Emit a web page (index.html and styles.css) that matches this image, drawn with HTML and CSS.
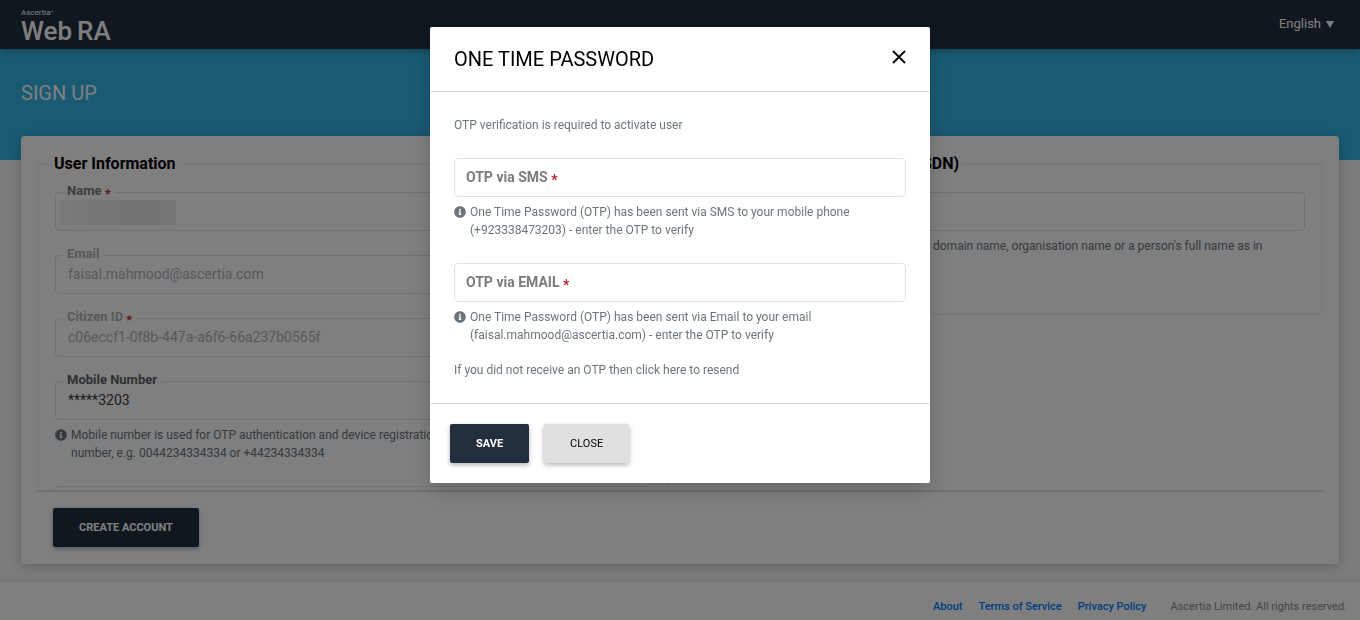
FILE: index.html
```html
<!DOCTYPE html>
<html lang="en">
<head>
<meta charset="utf-8">
<title>Sign Up - Ascertia WebRA</title>
<link rel="stylesheet" href="styles.css">
</head>
<body>
<svg class="sprite" aria-hidden="true">
  <symbol id="info" viewBox="0 0 512 512"><path fill="currentColor" d="M256 8C119 8 8 119 8 256s111 248 248 248 248-111 248-248S393 8 256 8zm0 110a42 42 0 1 1 0 84 42 42 0 0 1 0-84zm56 254a12 12 0 0 1-12 12h-88a12 12 0 0 1-12-12v-24a12 12 0 0 1 12-12h12v-64h-12a12 12 0 0 1-12-12v-24a12 12 0 0 1 12-12h64a12 12 0 0 1 12 12v100h12a12 12 0 0 1 12 12z"/></symbol>
</svg>
<div class="page">
  <header class="topbar">
    <a class="logo" href="#">
      <span class="logo-small">Ascertia<span class="logo-tm">™</span></span>
      <span class="logo-big"><span>Web</span><span>RA</span></span>
    </a>
    <button class="language" type="button">English
      <svg class="caret" viewBox="0 0 8 7" aria-hidden="true"><path fill="currentColor" d="M0 0h8L4 7z"/></svg>
    </button>
  </header>

  <main class="main">
    <h1 class="page-title">SIGN UP</h1>
    <form class="card">
      <div class="columns">
        <fieldset class="group">
          <legend>User Information</legend>
          <div class="group-body">
            <div class="field">
              <input id="name" type="text">
              <label class="muted" for="name">Name <span class="req">*</span></label>
              <span class="redacted"></span>
            </div>
            <div class="field">
              <input id="email" type="email" value="faisal.mahmood@ascertia.com" disabled>
              <label for="email">Email</label>
            </div>
            <div class="field">
              <input id="citizen" type="text" value="c06eccf1-0f8b-447a-a6f6-66a237b0565f" disabled>
              <label for="citizen">Citizen ID <span class="req">*</span></label>
            </div>
            <div class="field">
              <input id="mobile" type="text" value="*****3203">
              <label for="mobile">Mobile Number</label>
              <p class="hint"><svg aria-hidden="true"><use href="#info"/></svg><span>Mobile number is used for OTP authentication and device registration, enter a valid mobile<br>number, e.g. 0044234334334 or +44234334334</span></p>
            </div>
            <div class="field">
              <input type="text" aria-label="Additional information">
            </div>
          </div>
        </fieldset>
        <fieldset class="group">
          <legend>Subject Distinguished Name (SDN)</legend>
          <div class="group-body">
            <div class="field">
              <input id="cn" type="text">
              <label for="cn">Common Name</label>
              <p class="hint"><svg aria-hidden="true"><use href="#info"/></svg><span>Common name can be a fully qualified domain name, organisation name or a person's full name as in<br>their passport</span></p>
            </div>
          </div>
        </fieldset>
      </div>
      <div class="card-actions">
        <button class="btn btn-primary" type="submit">CREATE ACCOUNT</button>
      </div>
    </form>
  </main>

  <footer class="footer">
    <nav class="footer-links">
      <a href="#">About</a>
      <a href="#">Terms of Service</a>
      <a href="#">Privacy Policy</a>
    </nav>
    <span>Ascertia Limited. All rights reserved.</span>
  </footer>
</div>

<div class="backdrop">
  <form class="modal" role="dialog" aria-labelledby="otp-title">
    <header class="modal-header">
      <h2 id="otp-title">ONE TIME PASSWORD</h2>
      <button class="modal-x" type="button" aria-label="Close dialog">
        <svg viewBox="0 0 14 14" aria-hidden="true"><path d="M1 1l12 12M13 1L1 13" stroke="currentColor" stroke-width="1.8" fill="none"/></svg>
      </button>
    </header>
    <div class="modal-body">
      <p class="note">OTP verification is required to activate user</p>
      <div class="field field-empty">
        <input id="otp-sms" type="text">
        <label for="otp-sms">OTP via SMS <span class="req">*</span></label>
        <p class="hint"><svg aria-hidden="true"><use href="#info"/></svg><span>One Time Password (OTP) has been sent via SMS to your mobile phone (+923338473203) - enter the OTP to verify</span></p>
      </div>
      <div class="field field-empty">
        <input id="otp-email" type="text">
        <label for="otp-email">OTP via EMAIL <span class="req">*</span></label>
        <p class="hint"><svg aria-hidden="true"><use href="#info"/></svg><span>One Time Password (OTP) has been sent via Email to your email (faisal.mahmood@ascertia.com) - enter the OTP to verify</span></p>
      </div>
      <p class="resend">If you did not receive an OTP then <a href="#">click here to resend</a></p>
    </div>
    <footer class="modal-footer">
      <button class="btn btn-primary" type="submit">SAVE</button>
      <button class="btn btn-light" type="button">CLOSE</button>
    </footer>
  </form>
</div>
</body>
</html>
```
FILE: styles.css
```css
* { box-sizing: border-box; }
body {
  margin: 0;
  font-family: Roboto, "Liberation Sans", sans-serif;
  font-size: 12px;
  line-height: 18px;
  color: #6c757d;
}
p, h1, h2 { margin: 0; }
button, input { font-family: inherit; }
.sprite { position: absolute; width: 0; height: 0; }

.page {
  display: flex;
  flex-direction: column;
  height: 100vh;
  overflow: hidden;
}

/* Top bar */
.topbar {
  z-index: 1;
  display: flex;
  justify-content: space-between;
  align-items: flex-start;
  height: 49px;
  padding: 0 24px 0 21px;
  background: #232f3e;
  box-shadow: 0 2px 8px rgba(0, 0, 0, .25);
}
.logo {
  display: flex;
  flex-direction: column;
  padding-top: 9px;
  color: #fff;
  text-decoration: none;
}
.logo-small { display: flex; font-size: 8px; line-height: 8px; }
.logo-tm { font-size: 5px; line-height: 6px; }
.logo-big { display: flex; gap: 5px; font-size: 26px; font-weight: 500; line-height: 28px; }
.language {
  display: flex;
  align-items: center;
  gap: 5px;
  margin-top: 15px;
  padding: 0 2px;
  border: 0;
  background: none;
  color: #fff;
  font-size: 13px;
  line-height: 18px;
}
.caret { width: 8px; height: 7px; }

/* Page body */
.main {
  flex: 1;
  min-height: 0;
  display: flex;
  flex-direction: column;
  padding: 32px 21px 18px;
  background: linear-gradient(#34b6e6 0 111px, #f8f8f8 111px);
}
.page-title {
  margin-bottom: 31px;
  color: #fff;
  font-size: 20px;
  font-weight: 400;
  line-height: 24px;
}
.card {
  flex: 1;
  min-height: 0;
  display: flex;
  flex-direction: column;
  padding: 16px 16px 17px;
  border-radius: 4px;
  background: #fff;
  box-shadow: 0 2px 12px rgba(0, 0, 0, .22);
}
.columns {
  flex: 1;
  min-height: 0;
  display: grid;
  grid-template-columns: 1fr 1fr;
  gap: 24px;
  align-items: start;
  overflow: auto;
  scrollbar-width: none;
  border-bottom: 2px solid #e0e0e0;
}
.group {
  min-width: 0;
  margin: 0;
  padding: 0 11px;
  border: 2px solid #f4f4f4;
  border-radius: 4px;
}
.group legend {
  padding: 0 4px;
  color: #000;
  font-size: 16px;
  font-weight: 700;
  line-height: 24px;
}
.group-body { padding: 16px 5px; }
.card-actions { padding: 16px 16px 0; }

/* Fields */
.field { position: relative; margin-bottom: 24px; }
.field input {
  display: block;
  width: 100%;
  height: 39px;
  padding: 0 12px 2px;
  border: 1px solid #dee2e6;
  border-radius: 4px;
  background: #fff;
  color: #495057;
  font-size: 14px;
}
.group .field input { border-color: #e0e0e0; color: #404040; }
.group .field input:disabled { color: #b0b2b6; }
.field label {
  position: absolute;
  top: -10px;
  left: 8px;
  padding: 0 4px;
  background: #fff;
  color: #606060;
  font-size: 13px;
  font-weight: 700;
  line-height: 18px;
}
.field label.muted { color: #787a7e; }
.field input:disabled + label { color: #b0b2b6; }
.field-empty label {
  top: 10px;
  color: #7b7b7b;
  font-size: 14px;
}
.req {
  display: inline-block;
  color: #b3282d;
  line-height: 12px;
  vertical-align: -3px;
}
.redacted {
  position: absolute;
  top: 8px;
  left: 5px;
  width: 116px;
  height: 25px;
  background: linear-gradient(90deg, #f6f6f6, #ebebeb 30%, #e7e7e7 75%, #ececec);
}
.hint { display: flex; gap: 4px; margin-top: 6px; }
.hint svg { flex: none; width: 12px; height: 12px; margin-top: 3px; }

/* Buttons */
.btn {
  height: 39px;
  padding: 0 26px;
  border: 0;
  border-radius: 2px;
  font-size: 11px;
  font-weight: 700;
  box-shadow: 0 2px 5px rgba(0, 0, 0, .3);
}
.btn-primary { background: #232f3e; color: #fff; }
.btn-light { background: #e0e0e0; color: #000; font-weight: 400; }

/* Footer */
.footer {
  z-index: 1;
  display: flex;
  justify-content: flex-end;
  gap: 24px;
  padding: 16px 13px 4px;
  background: #fff;
  box-shadow: 0 -1px 6px rgba(0, 0, 0, .1);
  color: #8c8c8c;
  font-size: 11px;
}
.footer-links { display: flex; gap: 16px; }
.footer-links a { color: #007bff; font-weight: 500; text-decoration: none; }

/* Dialog */
.backdrop {
  position: fixed;
  inset: 0;
  z-index: 10;
  display: flex;
  justify-content: center;
  align-items: flex-start;
  padding: 27px 16px;
  overflow: auto;
  background: rgba(0, 0, 0, .5);
}
.modal {
  width: 100%;
  max-width: 500px;
  border-radius: 2px;
  background: #fff;
  box-shadow: 0 6px 20px rgba(0, 0, 0, .2);
}
.modal-header {
  display: flex;
  justify-content: space-between;
  align-items: flex-start;
  padding: 20px 24px;
  border-bottom: 1px solid #dedede;
}
.modal-header h2 {
  color: #000;
  font-size: 20px;
  font-weight: 400;
  line-height: 24px;
}
.modal-x { padding: 3px 0; border: 0; background: none; color: #000; }
.modal-x svg { display: block; width: 14px; height: 14px; }
.modal-body { padding: 24px; }
.note { margin-bottom: 24px; }
.field + .resend { margin-top: -7px; }
.resend a { color: inherit; text-decoration: none; }
.modal-footer {
  display: flex;
  gap: 15px;
  padding: 20px;
  border-top: 1px solid #dedede;
}
```
